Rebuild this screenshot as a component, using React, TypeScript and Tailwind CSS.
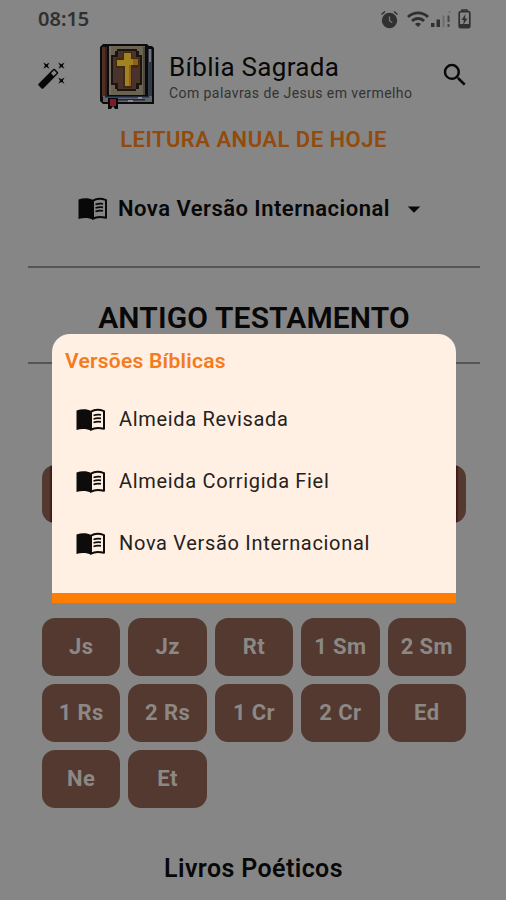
import type { ReactNode } from 'react';
import { MdArrowDropDown, MdAutoFixHigh, MdSearch, MdWifi } from 'react-icons/md';

const versions = ['Almeida Revisada', 'Almeida Corrigida Fiel', 'Nova Versão Internacional'];

const historyBooks = ['Js', 'Jz', 'Rt', '1 Sm', '2 Sm', '1 Rs', '2 Rs', '1 Cr', '2 Cr', 'Ed', 'Ne', 'Et'];

function BookTile({ children }: { children?: ReactNode }) {
  return (
    <div className="flex h-[58px] items-center justify-center rounded-[13px] bg-[#533930] pb-px text-[22px] font-bold tracking-[0.4px] text-[#8c8885]">
      {children}
    </div>
  );
}

function OpenBookIcon() {
  return (
    <svg className="shrink-0" width="30" height="24" viewBox="0 0 30 24" fill="none">
      <path
        d="M15 3.200C12 1 5.500.8 .5 2.500v19.500c4.500-1.700 11-1.500 14.500.8z"
        fill="currentColor"
      />
      <path
        d="M15 3.700c3-1.900 8.500-2.200 13-.6v17.700c-4.500-1.200-10-1-13 .9z"
        stroke="currentColor"
        strokeWidth="2"
        strokeLinejoin="round"
      />
      <path
        d="M17.500 7.500c2.200-.8 4.800-1 7.500-.6M17.500 11c2.200-.8 4.800-1 7.500-.6M17.500 14.500c2.200-.8 4.800-1 7.500-.6"
        stroke="currentColor"
        strokeWidth="1.700"
      />
    </svg>
  );
}

function AlarmIcon() {
  return (
    <svg width="18" height="19" viewBox="0 0 18 19" fill="none">
      <circle cx="8.500" cy="10.500" r="7.700" fill="#303030" />
      <path d="M.5 4.500 4 1.500M16.500 4.500 13 1.500" stroke="#303030" strokeWidth="1.500" />
      <path d="M8.500 6.500v4.200l2.700 1.800" stroke="#7a7a7a" strokeWidth="1.200" />
    </svg>
  );
}

function SignalIcon() {
  return (
    <svg width="20" height="18" viewBox="0 0 20 18">
      <path fill="#303030" d="M0 13h3.500v4H0zM5.500 9.500H9V17H5.500z" />
      <path fill="#6d6d6d" d="M11.500 5.500h2V17h-2z" />
      <path fill="#454545" d="M16.500 5.500h2V12h-2zM16.500 14h2v3h-2z" />
      <path fill="#707070" d="M17.500 1h2v2h-2z" />
    </svg>
  );
}

function BatteryIcon() {
  return (
    <svg width="13" height="20" viewBox="0 0 13 20" fill="none">
      <path d="M4 2V1h5v1" stroke="#303030" strokeWidth="1.500" />
      <rect x="1.200" y="2.700" width="10.600" height="16" rx="1.500" stroke="#303030" strokeWidth="1.700" />
      <path d="M2 15h9v3H2z" fill="#303030" />
      <path d="M7.500 5 3.500 11h2.300L5.200 16l4.300-6.500H7z" fill="#303030" />
    </svg>
  );
}

function BibleLogo() {
  return (
    <svg width="54" height="65" viewBox="0 0 54 65">
      {/* cover and page block */}
      <path fill="#0b0b0e" d="M3 0h44l2 2h3l2 2v56H3l-3-3V3z" />
      <path fill="#343a4b" d="M48 5h4v50h-4z" />
      <path fill="#73767e" d="M49 5h2v13h-2z" />
      <path fill="#4f3025" d="M2 3h5v50H2z" />
      <path fill="#38211a" d="M5 3h2v49H5z" />
      <path fill="#6b6351" d="M9 2h36v49H9z" />
      <path fill="#777060" d="M9 2h2v48H9z" />
      <path fill="#4e493f" d="M43 3h2v48h-2z" />
      {/* inset panel */}
      <path fill="#1b1411" d="M17 5h20v2h2v4h3v30h-3v4h-3v2H17v-2h-2v-4h-4V11h4V7h2z" />
      <path fill="#49332b" d="M18 7h18v6h4v26h-4v6H18v-6h-5V13h5z" />
      {/* cross */}
      <path fill="#3d2a10" d="M23 8h9v6h7v10h-7v20h-9V24h-7V14h7z" />
      <path fill="#a08220" d="M24 9h7v6h7v6h-7v21h-6V22h-8v-6h7z" />
      <path fill="#926018" d="M29 21h2v21h-2zM33 15h5v6h-5z" />
      {/* page edges */}
      <path fill="#646568" d="M3 52h49v6H3z" />
      <path fill="#1e2742" d="M5 52h44v1.500H5zM12 55h33v1.500H12z" />
      <path fill="#8c8988" d="M28 56h5v2h-5zM38 53h4v2h-4z" />
      {/* ribbon */}
      <path fill="#08080a" d="M8 54h10v11h-3l-2-3-2 3H8z" />
      <path fill="#831923" d="M10 55h6v7h-6z" />
    </svg>
  );
}

function StatusBar() {
  return (
    <div className="flex h-[38px] items-center justify-between pr-[35px] pl-[38px] text-[#303030]">
      <span className="font-['Noto_Sans',sans-serif] text-[20px] leading-none font-semibold">08:15</span>
      <div className="flex items-center">
        <AlarmIcon />
        <MdWifi className="ml-[7px]" size={24} />
        <span className="ml-px"><SignalIcon /></span>
        <span className="ml-[7px]"><BatteryIcon /></span>
      </div>
    </div>
  );
}

function VersionsModal() {
  return (
    <div className="absolute top-[334px] left-[52px] h-[269px] w-[404px] rounded-t-[18px] border-b-[10px] border-[#ff7d00] bg-[#fff0e3]">
      <h2 className="pt-[13px] pl-[13px] text-[21px] leading-[28px] font-semibold tracking-[0.25px] text-[#f47b20]">
        Versões Bíblicas
      </h2>
      <ul className="pt-[14px] pl-6 text-[#0d0c0a]">
        {versions.map((version) => (
          <li key={version} className="flex h-[62px] items-center gap-[13px]">
            <OpenBookIcon />
            <span className="pb-0.5 text-[20px] tracking-[0.68px] text-[#25211d]">{version}</span>
          </li>
        ))}
      </ul>
    </div>
  );
}

export default function App() {
  return (
    <div className="relative h-[900px] w-[506px] overflow-hidden bg-[#868686] font-[Roboto,sans-serif] text-[#080808]">
      <StatusBar />

      {/* Header */}
      <header className="flex h-[76px] items-start pt-[6px] pl-[37px]">
        <MdAutoFixHigh className="mt-[16px]" size={30} />
        <div className="ml-[33px]">
          <BibleLogo />
        </div>
        <div className="ml-[15px] w-[260px] whitespace-nowrap">
          <h1 className="mt-[7px] text-[26px] leading-[32px] tracking-[0.3px]">Bíblia Sagrada</h1>
          <p className="text-[14px] leading-[20px] tracking-[0.43px] text-[#333]">Com palavras de Jesus em vermelho</p>
        </div>
        <MdSearch className="mt-[16px] ml-[11px]" size={30} />
      </header>

      <p className="mt-[10px] pl-px text-center text-[22px] leading-[32px] font-semibold tracking-[0.48px] text-[#924b0c]">
        LEITURA ANUAL DE HOJE
      </p>

      <div className="mt-[36px] flex h-[34px] items-center pl-[78px]">
        <OpenBookIcon />
        <span className="ml-[10px] pb-0.5 text-[22px] font-semibold tracking-[0.48px]">Nova Versão Internacional</span>
        <MdArrowDropDown className="ml-[9px]" size={30} />
      </div>

      <div className="mr-[26px] ml-7 mt-[40px] border-t-2 border-[#555]" />
      <h2 className="mt-[32px] pl-0.5 text-center text-[30px] leading-[36px] font-semibold tracking-[0.15px]">
        ANTIGO TESTAMENTO
      </h2>
      <div className="mr-[26px] ml-7 mt-[26px] border-t-2 border-[#555]" />

      {/* Pentateuch row, mostly under the modal */}
      <div className="mx-[42px] mt-[101px] h-[58px] w-[424px] rounded-[13px] bg-[linear-gradient(90deg,#533930_7px,#3a1111_10px,#3a1111_414px,#533930_417px)]" />

      <div className="mx-[42px] mt-[95px] grid w-[424px] grid-cols-5 gap-2">
        {historyBooks.map((book) => (
          <BookTile key={book}>{book}</BookTile>
        ))}
      </div>

      <h3 className="mt-[45px] pl-px text-center text-[25px] leading-[32px] font-semibold tracking-[0.4px]">Livros Poéticos</h3>

      <VersionsModal />
    </div>
  );
}
